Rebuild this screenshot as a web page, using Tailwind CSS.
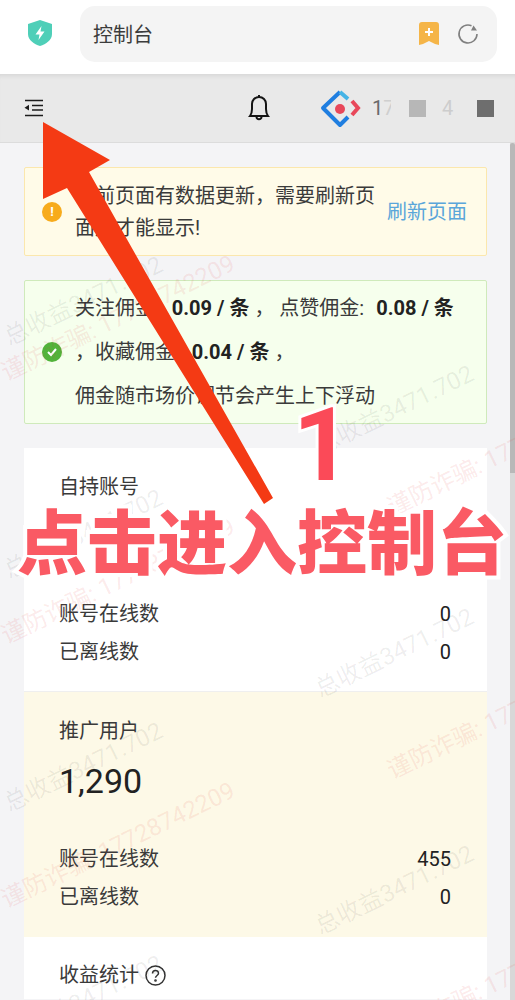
<!DOCTYPE html>
<html lang="zh-CN">
<head>
<meta charset="utf-8">
<script src="https://cdn.jsdelivr.net/npm/@tailwindcss/browser@4"></script>
</head>
<body class="m-0">
<div class="relative w-[515px] h-[1000px] overflow-hidden bg-[#f4f4f6] text-[20px] text-[#3a3a3a] font-['Roboto','Noto_Sans_CJK_SC',sans-serif]">

  <!-- browser bar -->
  <div class="h-[74px] bg-white flex items-start pl-[27px] pr-[18px] pt-[6px]">
    <svg class="mt-[13px] w-[26px] h-[28px] shrink-0" viewBox="0 0 26 28"><path d="M13 1 L25 5 V15 C25 21 19 25 13 27 C7 25 1 21 1 15 V5 Z" fill="#4fcfb8"/><path d="M14.5 7 L8.5 15.5 H12.5 L11.5 21 L17.5 12.5 H13.5 Z" fill="#fff"/></svg>
    <div class="ml-[27px] flex-1 h-[56px] rounded-[15px] bg-[#f4f4f4] flex items-center pl-[13px] pr-[18px]">
      <span class="flex-1 pt-[2px] text-[20px] text-[#3c3c3c]">控制台</span>
      <svg class="w-[20px] h-[24px]" viewBox="0 0 20 24"><path d="M3 0 H17 Q20 0 20 3 V23 L16 22 L10 19 L4 22 L0 23 V3 Q0 0 3 0 Z" fill="#f5b548"/><path d="M10 6 V14 M6 10 H14" stroke="#fff" stroke-width="2"/></svg>
      <svg class="ml-[18px] w-[22px] h-[22px]" viewBox="0 0 22 22" fill="none"><path d="M14.5 2.7 A9 9 0 1 0 20 11" stroke="#808080" stroke-width="1.6"/><path d="M16.5 2.5 L20 7.5 L14 7.5 Z" fill="#808080"/></svg>
    </div>
  </div>

  <!-- app header -->
  <div class="h-[69px] bg-[#e9e9e9] border-b border-[#dcdcdc] shadow-[inset_0_5px_4px_-3px_#d6d6d6] flex items-center pl-[24px]">
    <svg class="w-[20px] h-[18px] shrink-0" viewBox="0 0 20 18" fill="none" stroke="#1c1c1c"><path d="M1 1.5 H19 M8 6.5 H19 M8 11 H19 M1 16.5 H19" stroke-width="1.6"/><path d="M0.5 8.7 L5 5.8 V11.6 Z" fill="#1c1c1c" stroke="none"/></svg>
    <svg class="ml-[204px] w-[22px] h-[28px] shrink-0" viewBox="0 0 22 28" fill="none" stroke="#151515" stroke-width="2"><path d="M2 22 C3.5 20 4 18 4 15 V10 C4 6 7 3 11 3 C15 3 18 6 18 10 V15 C18 18 18.5 20 20 22 Z"/><path d="M11 1 V3 M8.5 23 C8.8 26 13.2 26 13.5 23"/></svg>
    <svg class="ml-[48px] w-[44px] h-[44px] shrink-0" viewBox="0 0 44 44" fill="none"><path d="M22 6 L5 22 L22 39 L30 31" stroke="#1f7ee0" stroke-width="4" stroke-linejoin="round"/><path d="M22 6 L30 13" stroke="#45b4e6" stroke-width="4"/><path d="M34 15 L40 22 L34 29" stroke="#e8485a" stroke-width="4"/><circle cx="22" cy="23" r="5" fill="#e8485a"/></svg>
    <span class="ml-[10px] w-[19px] overflow-hidden text-[20px] text-[#6a6a6a] whitespace-nowrap">1<span class="text-[#cfcfcf]">7</span></span>
    <div class="ml-[18px] w-[17px] h-[17px] bg-[#b7b7b7] shrink-0"></div>
    <span class="ml-[16px] w-[35px] text-[20px] text-[#cdcdcd]">4</span>
    <div class="ml-[0px] w-[17px] h-[17px] bg-[#6e6e6e] shrink-0"></div>
  </div>

  <!-- page content -->
  <div class="pl-[24px] pr-[28px] pt-[24px]">
    <div class="h-[89px] border border-[#fbe7ad] bg-[#fffbe8] rounded-[2px] flex items-center pl-[17px] pr-[19px]">
      <div class="w-[20px] h-[20px] rounded-full bg-[#f7ab1c] text-white text-[13px] font-bold flex items-center justify-center shrink-0">!</div>
      <p class="ml-[13px] flex-1 leading-[32px] whitespace-nowrap">当前页面有数据更新，需要刷新页<br>面后才能显示!</p>
      <span class="text-[#5aa6da]">刷新页面</span>
    </div>

    <div class="mt-[24px] h-[144px] border border-[#cfeabb] bg-[#f6ffed] rounded-[2px] flex items-center pl-[17px]">
      <div class="w-[20px] h-[20px] rounded-full bg-[#52b33a] flex items-center justify-center shrink-0">
        <svg class="w-[12px] h-[12px]" viewBox="0 0 12 12" fill="none" stroke="#fff" stroke-width="2"><path d="M2 6 L5 9 L10 3"/></svg>
      </div>
      <p class="ml-[13px] leading-[44px] whitespace-nowrap">关注佣金:<b class="ml-[12px] text-[#222]">0.09 / 条</b> ， 点赞佣金:<b class="ml-[12px] text-[#222]">0.08 / 条</b><br>，收藏佣金:<b class="ml-[12px] text-[#222]">0.04 / 条</b> ，<br>佣金随市场价调节会产生上下浮动</p>
    </div>

    <div class="mt-[24px] h-[244px] bg-white border-b border-[#efefef] pl-[35px] pr-[36px] pt-[24px]">
      <div class="h-[30px] leading-[30px]">自持账号</div>
      <div class="mt-[10px] h-[50px] leading-[50px] text-[34px] text-[#222]">0</div>
      <div class="mt-[33px] h-[38px] leading-[38px] flex justify-between"><span>账号在线数</span><span class="text-[#222]">0</span></div>
      <div class="h-[38px] leading-[38px] flex justify-between"><span>已离线数</span><span class="text-[#222]">0</span></div>
    </div>

    <div class="h-[245px] bg-[#fdf9e7] pl-[35px] pr-[36px] pt-[24px]">
      <div class="h-[30px] leading-[30px]">推广用户</div>
      <div class="mt-[10px] h-[50px] leading-[50px] text-[34px] text-[#222]">1,290</div>
      <div class="mt-[34px] h-[38px] leading-[38px] flex justify-between"><span>账号在线数</span><span class="text-[#222]">455</span></div>
      <div class="h-[38px] leading-[38px] flex justify-between"><span>已离线数</span><span class="text-[#222]">0</span></div>
    </div>

    <div class="h-[62px] bg-white pl-[35px] pt-[23px]">
      <div class="h-[30px] leading-[30px] flex items-center">收益统计
        <svg class="ml-[6px] w-[21px] h-[21px]" viewBox="0 0 21 21" fill="none" stroke="#333" stroke-width="1.5"><circle cx="10.5" cy="10.5" r="9.5"/><path d="M7.5 8.5 C7.5 4.5 13.5 4.5 13.5 8.3 C13.5 10.5 10.5 10.5 10.5 12.8"/><circle cx="10.5" cy="15.5" r=".6"/></svg>
      </div>
    </div>
  </div>

  <!-- scrollbar -->
  <div class="absolute right-0 top-[143px] bottom-0 w-[5px] bg-[#d8d8d8]"></div>
  <div class="absolute right-0 top-[143px] h-[330px] w-[5px] rounded-t-[3px] bg-[#b8b8b8]"></div>

  <!-- watermarks -->
  <div class="absolute inset-0 pointer-events-none text-[24px] whitespace-nowrap">
    <span class="absolute left-[-3px] top-[283px] -rotate-[26deg] text-black/[0.07]">总收益3471.702</span>
    <span class="absolute left-[-3px] top-[516px] -rotate-[26deg] text-black/[0.07]">总收益3471.702</span>
    <span class="absolute left-[-3px] top-[749px] -rotate-[26deg] text-black/[0.07]">总收益3471.702</span>
    <span class="absolute left-[-3px] top-[982px] -rotate-[26deg] text-black/[0.07]">总收益3471.702</span>
    <span class="absolute left-[308px] top-[392px] -rotate-[26deg] text-black/[0.07]">总收益3471.702</span>
    <span class="absolute left-[308px] top-[635px] -rotate-[26deg] text-black/[0.07]">总收益3471.702</span>
    <span class="absolute left-[308px] top-[872px] -rotate-[26deg] text-black/[0.07]">总收益3471.702</span>
    <span class="absolute left-[-10px] top-[300px] -rotate-[26deg] text-[#e03c3c]/[0.11]">谨防诈骗: 17728742209</span>
    <span class="absolute left-[-10px] top-[563px] -rotate-[26deg] text-[#e03c3c]/[0.11]">谨防诈骗: 17728742209</span>
    <span class="absolute left-[-10px] top-[827px] -rotate-[26deg] text-[#e03c3c]/[0.11]">谨防诈骗: 17728742209</span>
    <span class="absolute left-[376px] top-[435px] -rotate-[26deg] text-[#e03c3c]/[0.11]">谨防诈骗: 17728742209</span>
    <span class="absolute left-[376px] top-[698px] -rotate-[26deg] text-[#e03c3c]/[0.11]">谨防诈骗: 17728742209</span>
    <span class="absolute left-[376px] top-[961px] -rotate-[26deg] text-[#e03c3c]/[0.11]">谨防诈骗: 17728742209</span>
  </div>

  <!-- annotation overlay -->
  <svg class="absolute inset-0 w-[515px] h-[1000px] pointer-events-none" viewBox="0 0 515 1000"><polygon points="43,122 110,160 89,172 273,498 264,504 67,188 43,199" fill="#f43a14"/></svg>
  <div class="absolute left-[293px] top-[385px] w-[50px] text-center text-[102px] leading-[120px] font-bold text-[#fb4a58] font-['Roboto',sans-serif] [-webkit-text-stroke:6px_#fff] [paint-order:stroke_fill]">1</div>
  <div class="absolute left-[17px] top-[489px] w-[490px] text-[70px] leading-[100px] font-black text-[#fa5a64] whitespace-nowrap font-['Noto_Sans_CJK_SC',sans-serif] [-webkit-text-stroke:8px_#fff] [paint-order:stroke_fill]">点击进入控制台</div>
</div>
</body>
</html>
